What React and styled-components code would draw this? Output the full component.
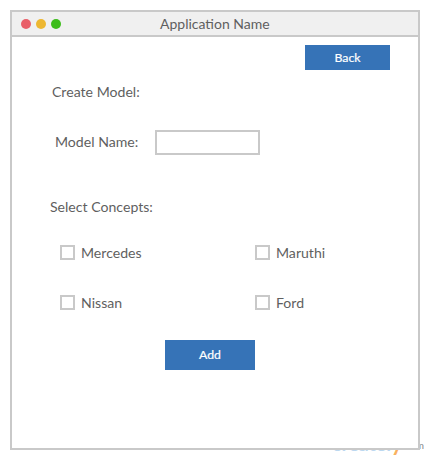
import React from "react";
import styled, { createGlobalStyle } from "styled-components";

const Global = createGlobalStyle`
  * { box-sizing: border-box; }
  body { margin: 0; background: #fff; overflow: hidden; }
`;
const Page = styled.div`
  position: relative;
  width: 430px;
  height: 460px;
  padding: 10px;
  font: 14.1px/20px Lato, sans-serif;
  color: #5f5f5f;
`;
const Window = styled.main`
  position: relative;
  width: 410px;
  height: 440px;
  border: 2px solid #c9c9c9;
  background: #fff;
`;
const TitleBar = styled.header`
  display: flex;
  align-items: center;
  height: 25px;
  padding-left: 9px;
  background: #f0f0f0;
  border-bottom: 2px solid #c9c9c9;
`;
const Dots = styled.div`
  display: flex;
  gap: 5px;
  width: 139px;
`;
const Dot = styled.i`
  width: 10px;
  height: 10px;
  border-radius: 50%;
  background: ${(p) => p.$color};
`;
const Title = styled.h1`
  margin: 0;
  font: inherit;
  font-size: 14px;
`;
const Button = styled.button`
  display: block;
  width: ${(p) => p.$width}px;
  height: ${(p) => p.$height}px;
  padding: 0;
  border: 0;
  background: #3673b7;
  color: #fff;
  font: 400 12.3px/16px Lato, sans-serif;
  -webkit-text-stroke: 0.2px #fff;
`;
const Actions = styled.div`
  display: flex;
  justify-content: ${(p) => p.$align};
  padding: ${(p) => p.$pad};
`;
const Heading = styled.h2`
  margin: ${(p) => p.$margin};
  font: inherit;
`;
const Field = styled.label`
  display: flex;
  height: 25px;
  margin: 28px 0 0 43px;
`;
const FieldLabel = styled.span`
  width: 100px;
  padding-top: 2px;
`;
const Input = styled.input`
  width: 105px;
  height: 25px;
  border: 2px solid #c9c9c9;
  border-radius: 0;
  background: #fff;
`;
const Options = styled.div`
  display: grid;
  grid-template-columns: 195px 150px;
  grid-auto-rows: 20px;
  row-gap: 30px;
  margin: 26px 0 0 48px;
`;
const Option = styled.label`
  display: flex;
  gap: 6px;
`;
const Checkbox = styled.input`
  appearance: none;
  width: 15px;
  height: 15px;
  margin: 2px 0 0;
  border: 2px solid #c9c9c9;
  background: #fff;
`;
const Watermark = styled.div`
  position: absolute;
  left: 332px;
  top: 431px;
  font: bold 19.5px/24px Lato, sans-serif;
  color: #bcd8f0;
`;
const Tail = styled.span`
  color: #f9b15f;
  font-size: 22px;
`;
const Domain = styled.div`
  position: absolute;
  right: 6px;
  top: 439px;
  font: 10px/12px Lato, sans-serif;
  color: #888;
`;

export default function App() {
  return (
    <Page>
      <Global />
      <Watermark>createl<Tail>y</Tail></Watermark>
      <Domain>.com</Domain>
      <Window>
        <TitleBar>
          <Dots><Dot $color="#e95f69" /><Dot $color="#edb732" /><Dot $color="#3dbd1b" /></Dots>
          <Title>Application Name</Title>
        </TitleBar>
        <Actions $align="flex-end" $pad="8px 28px 0 0"><Button $width={85} $height={25}>Back</Button></Actions>
        <Heading $margin="12px 0 0 40px">Create Model:</Heading>
        <Field><FieldLabel>Model Name:</FieldLabel><Input /></Field>
        <Heading $margin="42px 0 0 38px">Select Concepts:</Heading>
        <Options>
          {["Mercedes", "Maruthi", "Nissan", "Ford"].map((n) => (
            <Option key={n}><Checkbox type="checkbox" />{n}</Option>
          ))}
        </Options>
        <Actions $align="flex-start" $pad="27px 0 0 153px"><Button $width={90} $height={30}>Add</Button></Actions>
      </Window>
    </Page>
  );
}
